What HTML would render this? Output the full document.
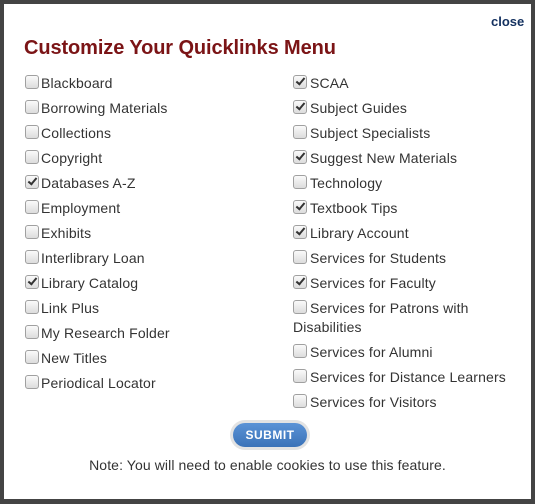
<!DOCTYPE html>
<html><head><style>
body{margin:0;width:535px;height:504px;background:#444;overflow:hidden;font-family:"Liberation Sans",Arial,sans-serif;}
#box{position:absolute;left:4px;top:4px;width:527px;height:495px;background:#fff;}
.close{position:absolute;left:491px;top:14px;font-size:13px;font-weight:bold;color:#13305f;}
h1{position:absolute;left:24px;top:37px;margin:0;font-size:20px;font-weight:bold;color:#7b1416;letter-spacing:-0.1px;}
.i{position:absolute;font-size:14px;color:#333;line-height:19px;white-space:nowrap;letter-spacing:0.15px;}
.cb{position:absolute;width:12px;height:12px;border:1px solid #a0a0a0;border-radius:3px;background:linear-gradient(#fafafa,#dcdcdc);}
.cb.c::after{content:"";position:absolute;left:4px;top:0px;width:3px;height:7px;border:solid #333;border-width:0 2px 2px 0;transform:rotate(40deg);}
.btn{position:absolute;left:230px;top:420px;width:80px;height:30px;border-radius:16px;background:#e3e3e3;}
.btn div{position:absolute;left:3px;top:3px;width:74px;height:24px;border-radius:12px;background:linear-gradient(#5b93d6,#3a72b8);color:#fff;font-weight:bold;font-size:12px;text-align:center;line-height:24px;letter-spacing:0.5px;}
.note{position:absolute;left:0;width:535px;top:457px;text-align:center;font-size:14px;color:#333;letter-spacing:0.1px;}
</style></head><body>
<div id="box"></div>
<div class="close">close</div>
<h1>Customize Your Quicklinks Menu</h1>
<div id="items"></div>
<div class="btn"><div>SUBMIT</div></div>
<div class="note">Note: You will need to enable cookies to use this feature.</div>
<script>
var L=[["Blackboard",0],["Borrowing Materials",0],["Collections",0],["Copyright",0],["Databases A-Z",1],["Employment",0],["Exhibits",0],["Interlibrary Loan",0],["Library Catalog",1],["Link Plus",0],["My Research Folder",0],["New Titles",0],["Periodical Locator",0]];
var R=[["SCAA",1,83],["Subject Guides",1,108],["Subject Specialists",0,133],["Suggest New Materials",1,158],["Technology",0,183],["Textbook Tips",1,208],["Library Account",1,233],["Services for Students",0,258],["Services for Faculty",1,283],["Services for Patrons with",0,308],["Services for Alumni",0,352],["Services for Distance Learners",0,377],["Services for Visitors",0,402]];
var h="";
L.forEach(function(a,k){var y=83+25*k;h+='<div class="cb'+(a[1]?' c':'')+'" style="left:25px;top:'+(y-8)+'px"></div><div class="i" style="left:41px;top:'+(y-9)+'px">'+a[0]+'</div>';});
R.forEach(function(a){var y=a[2];h+='<div class="cb'+(a[1]?' c':'')+'" style="left:293px;top:'+(y-8)+'px"></div><div class="i" style="left:310px;top:'+(y-9)+'px">'+a[0]+'</div>';});
h+='<div class="i" style="left:293px;top:318px">Disabilities</div>';
document.getElementById("items").innerHTML=h;
</script>
</body></html>
